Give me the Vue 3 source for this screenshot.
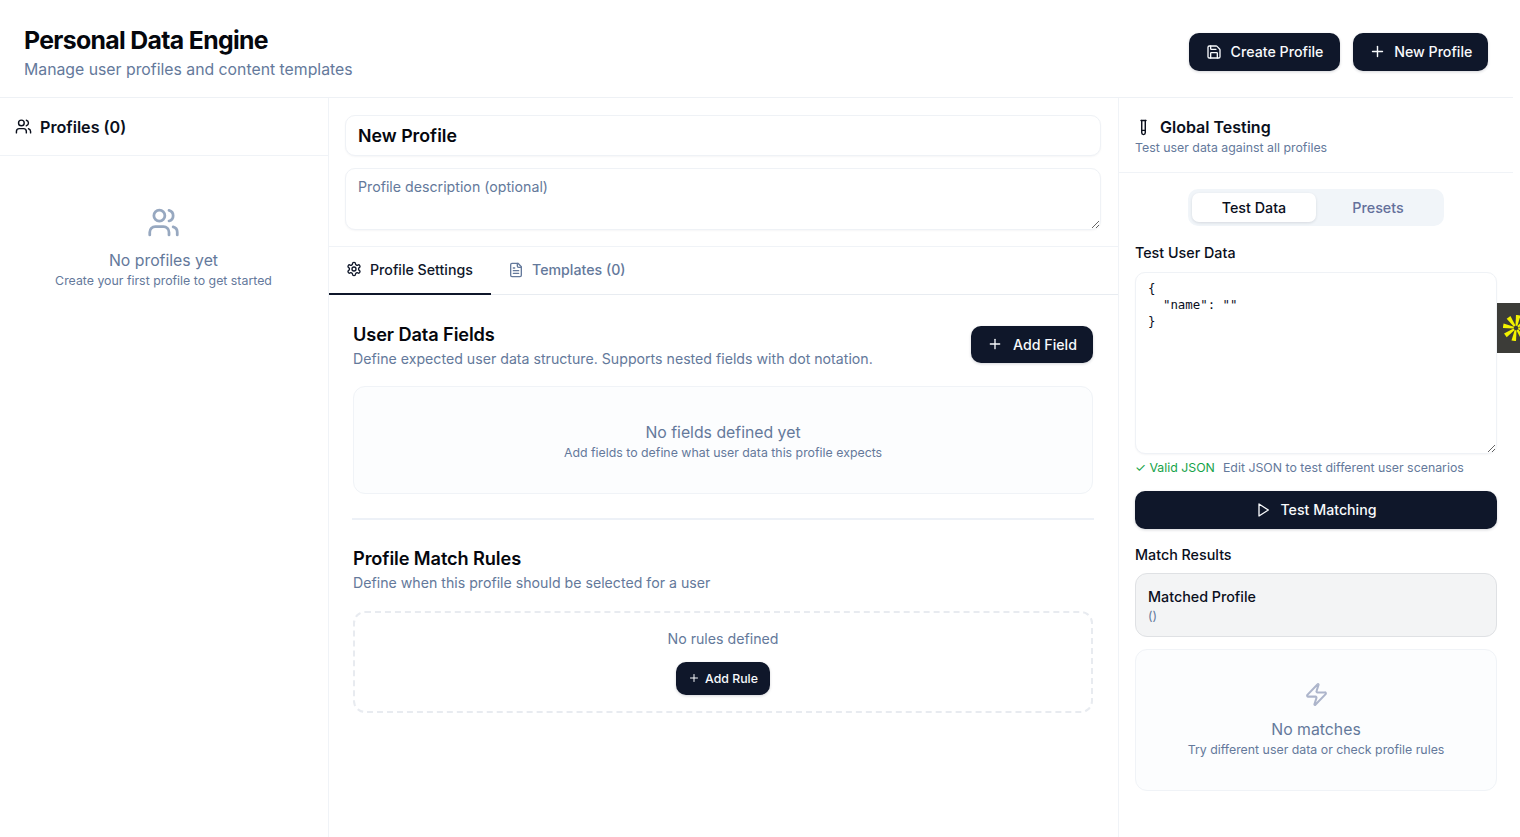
<script setup>
import { h } from 'vue'

const paths = {
  users: ['M16 21v-2a4 4 0 0 0-4-4H6a4 4 0 0 0-4 4v2', 'M9 3a4 4 0 1 0 0 8a4 4 0 1 0 0-8', 'M22 21v-2a4 4 0 0 0-3-3.87', 'M16 3.13a4 4 0 0 1 0 7.75'],
  save: ['M15.2 3a2 2 0 0 1 1.4.6l3.8 3.8a2 2 0 0 1 .6 1.4V19a2 2 0 0 1-2 2H5a2 2 0 0 1-2-2V5a2 2 0 0 1 2-2z', 'M17 21v-7a1 1 0 0 0-1-1H8a1 1 0 0 0-1 1v7', 'M7 3v4a1 1 0 0 0 1 1h7'],
  plus: ['M5 12h14', 'M12 5v14'],
  settings: ['M12.22 2h-.44a2 2 0 0 0-2 2v.18a2 2 0 0 1-1 1.73l-.43.25a2 2 0 0 1-2 0l-.15-.08a2 2 0 0 0-2.73.73l-.22.38a2 2 0 0 0 .73 2.73l.15.1a2 2 0 0 1 1 1.72v.51a2 2 0 0 1-1 1.74l-.15.09a2 2 0 0 0-.73 2.73l.22.38a2 2 0 0 0 2.73.73l.15-.08a2 2 0 0 1 2 0l.43.25a2 2 0 0 1 1 1.73V20a2 2 0 0 0 2 2h.44a2 2 0 0 0 2-2v-.18a2 2 0 0 1 1-1.73l.43-.25a2 2 0 0 1 2 0l.15.08a2 2 0 0 0 2.73-.73l.22-.39a2 2 0 0 0-.73-2.73l-.15-.08a2 2 0 0 1-1-1.74v-.5a2 2 0 0 1 1-1.74l.15-.09a2 2 0 0 0 .73-2.73l-.22-.38a2 2 0 0 0-2.73-.73l-.15.08a2 2 0 0 1-2 0l-.43-.25a2 2 0 0 1-1-1.73V4a2 2 0 0 0-2-2z', 'M12 9a3 3 0 1 0 0 6a3 3 0 1 0 0-6'],
  file: ['M15 2H6a2 2 0 0 0-2 2v16a2 2 0 0 0 2 2h12a2 2 0 0 0 2-2V7Z', 'M14 2v4a2 2 0 0 0 2 2h4', 'M10 9H8', 'M16 13H8', 'M16 17H8'],
  tube: ['M14.5 2v17.5c0 1.4-1.1 2.5-2.5 2.5c-1.4 0-2.5-1.1-2.5-2.5V2', 'M8.5 2h7', 'M14.5 16h-5'],
  play: ['M6 3L20 12L6 21Z'],
  zap: ['M4 14a1 1 0 0 1-.78-1.63l9.9-10.2a.5.5 0 0 1 .86.46l-1.92 6.02A1 1 0 0 0 13 10h7a1 1 0 0 1 .78 1.63l-9.9 10.2a.5.5 0 0 1-.86-.46l1.92-6.02A1 1 0 0 0 11 14z']
}

const Icon = (props) =>
  h('svg', { width: props.size, height: props.size, viewBox: '0 0 24 24', fill: 'none', stroke: 'currentColor', 'stroke-width': 2, 'stroke-linecap': 'round', 'stroke-linejoin': 'round' },
    paths[props.name].map((d) => h('path', { d })))
Icon.props = ['name', 'size']

const json = '{\n  "name": ""\n}'
</script>

<template>
  <div class="app">
    <header class="top">
      <div>
        <h1>Personal Data Engine</h1>
        <p class="subtitle">Manage user profiles and content templates</p>
      </div>
      <div class="top-actions">
        <button class="btn create"><Icon name="save" :size="16" />Create Profile</button>
        <button class="btn new"><Icon name="plus" :size="17" />New Profile</button>
      </div>
    </header>

    <main class="body">
      <aside class="left">
        <div class="left-head">
          <Icon name="users" :size="17" />
          <h2>Profiles (0)</h2>
        </div>
        <div class="left-empty">
          <Icon class="empty-icon" name="users" :size="33" />
          <p class="empty-title">No profiles yet</p>
          <p class="empty-sub">Create your first profile to get started</p>
        </div>
      </aside>

      <section class="center">
        <div class="meta">
          <input class="name-input" value="New Profile" />
          <textarea class="desc-input" placeholder="Profile description (optional)"></textarea>
        </div>
        <nav class="tabs">
          <div class="tab active"><Icon name="settings" :size="16" />Profile Settings</div>
          <div class="tab"><Icon name="file" :size="16" />Templates (0)</div>
        </nav>
        <div class="content">
          <div class="section-head">
            <div>
              <h3>User Data Fields</h3>
              <p class="desc">Define expected user data structure. Supports nested fields with dot notation.</p>
            </div>
            <button class="btn add-field"><Icon name="plus" :size="16" />Add Field</button>
          </div>
          <div class="fields-empty">
            <p class="empty-title">No fields defined yet</p>
            <p class="empty-sub">Add fields to define what user data this profile expects</p>
          </div>
          <hr class="sep" />
          <h3>Profile Match Rules</h3>
          <p class="desc">Define when this profile should be selected for a user</p>
          <div class="rules-empty">
            <p class="no-rules">No rules defined</p>
            <button class="btn add-rule"><Icon name="plus" :size="12" />Add Rule</button>
          </div>
        </div>
      </section>

      <aside class="right">
        <div class="right-head">
          <div class="right-title">
            <Icon name="tube" :size="17" />
            <h2>Global Testing</h2>
          </div>
          <p class="right-sub">Test user data against all profiles</p>
        </div>
        <div class="right-body">
          <div class="switch">
            <div class="switch-item on">Test Data</div>
            <div class="switch-item">Presets</div>
          </div>
          <p class="label first">Test User Data</p>
          <textarea class="json" :value="json" spellcheck="false"></textarea>
          <p class="status"><span class="valid">✓ Valid JSON</span><span>Edit JSON to test different user scenarios</span></p>
          <button class="btn run"><Icon name="play" :size="16" />Test Matching</button>
          <p class="label second">Match Results</p>
          <div class="matched">
            <p class="matched-title">Matched Profile</p>
            <p class="matched-sub">()</p>
          </div>
          <div class="no-match">
            <Icon class="zap" name="zap" :size="25" />
            <p class="empty-title">No matches</p>
            <p class="empty-sub">Try different user data or check profile rules</p>
          </div>
        </div>
      </aside>
    </main>

    <div class="widget">
      <svg width="26" height="26" viewBox="-17 -17 34 34" fill="#f2f200">
        <path v-for="a in [0, 45, 90, 135, 180, 225, 270, 315]" :key="a" d="M-3 -17L3 -17L1.2 -3L-1.2 -3Z" :transform="`rotate(${a + 10})`" />
      </svg>
    </div>
  </div>
</template>

<style>
html, body { margin: 0; background: #fff; overflow: hidden; }
</style>

<style scoped>
* { box-sizing: border-box; }
h1, h2, h3, p { margin: 0; }
.app {
  position: relative;
  width: 1520px;
  height: 837px;
  overflow: hidden;
  background: #fff;
  color: #0a0f1c;
  font-family: Inter, "Liberation Sans", sans-serif;
}
.top {
  width: 1513px;
  height: 98px;
  padding: 14px 24px 0;
  display: flex;
  align-items: center;
  justify-content: space-between;
  border-bottom: 1px solid #eef1f5;
}
h1 { font-size: 24.8px; font-weight: 700; line-height: 30px; letter-spacing: -0.66px; margin-top: -3px; color: #05070d; }
.subtitle { font-size: 15.8px; line-height: 26px; color: #64799b; margin-top: 2px; }
.top-actions { display: flex; gap: 13px; margin-bottom: 7px; margin-right: 1px; }
.btn {
  display: flex;
  align-items: center;
  justify-content: center;
  border: 0;
  padding: 0 0 1px;
  background: #0f172a;
  color: #f8fafc;
  font-family: inherit;
  font-size: 14.2px;
  font-weight: 500;
  white-space: nowrap;
  border-radius: 10px;
  box-shadow: 0 1px 3px rgba(15, 23, 42, .18);
}
.create { width: 151px; height: 38px; gap: 9px; }
.new { width: 135px; height: 38px; gap: 8.5px; }

.body { display: flex; width: 1513px; height: 739px; }
.left { width: 329px; border-right: 1px solid #f0f3f7; }
.left-head {
  height: 58px;
  padding: 0 16px;
  display: flex;
  align-items: center;
  gap: 8px;
  border-bottom: 1px solid #f0f3f7;
}
.left-head svg { margin-left: -1px; }
h2 { font-size: 16px; font-weight: 600; line-height: 24px; }
.left-head h2 { font-size: 16.15px; }
.left-empty { display: flex; flex-direction: column; align-items: center; padding: 50px 1px 0 0; }
.empty-icon { color: #97a8c0; margin-bottom: 10px; }
.empty-title { font-size: 15.8px; line-height: 24px; color: #64799b; }
.empty-sub { font-size: 12.35px; line-height: 17px; color: #64799b; margin-top: -1px; }

.center { width: 790px; border-right: 1px solid #f0f3f7; }
.meta { height: 149px; padding: 17px 17px 0 16px; border-bottom: 1px solid #f0f3f7; }
.name-input, .desc-input, .json {
  display: block;
  width: 100%;
  border: 1px solid #eff2f6;
  border-radius: 10px;
  background: #fff;
  font-family: inherit;
  outline: none;
  box-shadow: 0 1px 2px rgba(15, 23, 42, .04);
}
.name-input { height: 41px; padding: 0 12px; font-size: 17.8px; font-weight: 600; color: #05070d; }
.desc-input { height: 62px; margin-top: 12px; padding: 8px 12px; font-size: 14.2px; line-height: 20px; resize: vertical; }
.desc-input::placeholder { color: #64799b; opacity: 1; }
.tabs { height: 48px; display: flex; border-bottom: 1px solid #e8ecf1; }
.tab {
  height: 47px;
  display: flex;
  align-items: center;
  gap: 8px;
  padding: 0 17px 2px;
  font-size: 14.2px;
  font-weight: 500;
  white-space: nowrap;
  color: #64799b;
}
.tab.active { width: 162px; color: #0f172a; border-bottom: 2px solid #0f172a; height: 48px; }
.content { padding: 31px 25px 0 24px; }
.section-head { display: flex; justify-content: space-between; align-items: flex-start; }
h3 { font-size: 18.2px; font-weight: 600; line-height: 27px; letter-spacing: -0.1px; color: #05070d; margin-top: -5px; }
.desc { font-size: 14.16px; line-height: 21px; color: #64799b; }
.add-field { width: 122px; height: 37px; gap: 10px; }
.fields-empty {
  height: 108px;
  margin-top: 17px;
  border: 1px solid #f0f3f7;
  border-radius: 12px;
  background: #fcfdfe;
  text-align: center;
  padding-top: 34px;
}
.sep { height: 2px; border: 0; background: #edf1f7; margin: 24px -1px 30px -1px; }
.rules-empty {
  height: 102px;
  margin-top: 18px;
  border: 2px dashed #e8ebf0;
  border-radius: 12px;
  display: flex;
  flex-direction: column;
  align-items: center;
  padding-top: 15px;
}
.no-rules { font-size: 14.2px; line-height: 21px; color: #64799b; }
.add-rule { width: 94px; height: 33px; gap: 5px; margin-top: 13px; font-size: 12.3px; border-radius: 10px; }

.right { width: 394px; }
.right-head { height: 75px; padding: 17px 17px 0 16px; border-bottom: 1px solid #f0f3f7; }
.right-title { display: flex; align-items: center; gap: 8px; height: 24px; }
.right-sub { font-size: 12.35px; line-height: 17px; color: #64799b; }
.right-body { padding: 16px 16px 0 16px; }
.switch {
  width: 256px;
  height: 37px;
  margin: 0 auto;
  padding: 4px;
  display: flex;
  background: #f1f5f9;
  border-radius: 10px;
}
.switch-item { flex: 1; display: flex; align-items: center; justify-content: center; font-size: 14.3px; font-weight: 500; color: #64709b; border-radius: 7px; }
.switch-item.on { background: #fff; color: #0a0f1c; box-shadow: 0 1px 3px rgba(15, 23, 42, .12); }
.label { font-size: 14.3px; font-weight: 500; line-height: 21px; }
.label.first { margin-top: 16px; }
.json {
  height: 182px;
  margin-top: 9px;
  padding: 8px 12px;
  font-family: "DejaVu Sans Mono", "Liberation Mono", monospace;
  font-size: 12.4px;
  line-height: 16.4px;
  color: #0a0f1c;
  resize: vertical;
}
.status { display: flex; gap: 8px; margin-top: 5px; font-size: 12.35px; line-height: 18px; color: #64799b; }
.valid { color: #16a34a; }
.run { width: 100%; height: 38px; margin-top: 14px; gap: 9px; }
.label.second { margin-top: 15px; }
.matched {
  height: 64px;
  margin-top: 8px;
  padding: 12px 12px 0 12px;
  background: #f3f4f5;
  border: 1px solid #dfe1e4;
  border-radius: 12px;
}
.matched-title { font-size: 14.3px; font-weight: 500; line-height: 21px; }
.matched-sub { font-size: 12.4px; line-height: 17px; color: #64799b; }
.no-match {
  height: 142px;
  margin-top: 12px;
  border: 1px solid #f0f3f7;
  border-radius: 12px;
  background: #fcfdfe;
  display: flex;
  flex-direction: column;
  align-items: center;
  padding-top: 32px;
}
.zap { color: #adb5cb; margin-bottom: 11px; }

.widget {
  position: absolute;
  left: 1497px;
  top: 303px;
  width: 23px;
  height: 50px;
  background: #3c3c38;
  overflow: hidden;
}
.widget svg { position: absolute; left: 6px; top: 12px; }
</style>
